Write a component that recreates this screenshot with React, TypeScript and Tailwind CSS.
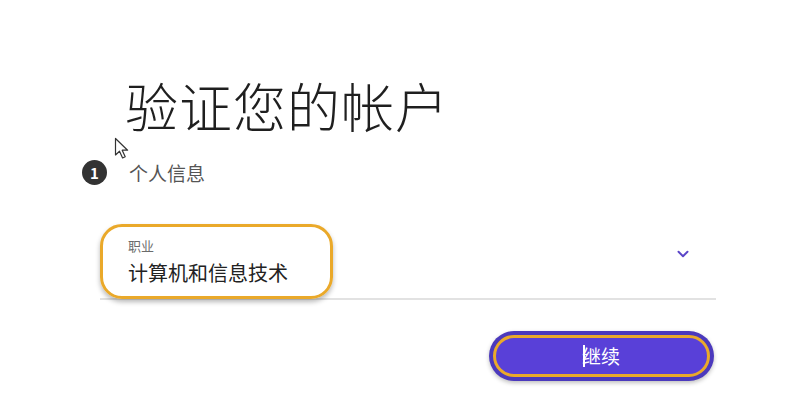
import { ChevronDown } from "lucide-react";

const cjk = { fontFamily: '"Noto Sans CJK SC", "Noto Sans", sans-serif' };

const CursorArrow = () => (
  <svg width="20" height="24" viewBox="0 0 20 24" className="absolute left-[114px] top-[137px]">
    <path
      d="M1.5 1.5 L1.5 18 L5.5 14.2 L8.6 21 L11.2 19.8 L8.2 13.2 L13.6 13.2 Z"
      fill="#fff"
      stroke="#333"
      strokeWidth="1.2"
      strokeLinejoin="round"
    />
  </svg>
);

export default function App() {
  return (
    <div className="relative min-h-[409px] w-[800px] bg-white overflow-hidden" style={cjk}>
      <CursorArrow />

      <div className="flex flex-col pt-[74px]">
        {/* Heading */}
        <h1 className="pl-[125px] text-[53px] leading-[62px] font-light text-[#1f1f1f] tracking-[1px]">
          验证您的帐户
        </h1>

        {/* Step indicator */}
        <div className="mt-[24px] flex items-center pl-[82px] gap-[22px]">
          <span className="flex h-[25px] w-[25px] items-center justify-center rounded-full bg-[#333333] text-[15px] font-bold text-white leading-none">
            1
          </span>
          <span className="text-[19px] leading-[24px] text-[#555555]">个人信息</span>
        </div>

        {/* Occupation select */}
        <div className="relative mt-[37px] ml-[100px] w-[616px] border-b-[2px] border-[#e2e2e2]">
          <div className="flex items-center justify-between h-[76px] pl-[28px] pr-[24px]">
            <div className="flex flex-col pt-[2px]">
              <span className="text-[13px] leading-[17px] text-[#6b6b6b]">职业</span>
              <span className="mt-[7px] text-[20px] leading-[24px] text-[#222222]">计算机和信息技术</span>
            </div>
            <ChevronDown className="mb-[12px] h-[18px] w-[18px] text-[#5b46c8]" strokeWidth={2.6} />
          </div>
          <div className="pointer-events-none absolute left-0 top-[2px] h-[75px] w-[233px] rounded-[22px] border-[3px] border-[#eaa92a] shadow-[0_3px_5px_rgba(0,0,0,0.28)]" />
        </div>

        {/* Continue button */}
        <div className="mt-[31px] flex justify-end pr-[86px]">
          <button className="flex h-[50px] w-[225px] items-center justify-center rounded-full bg-[#4b39bd] p-[4px] shadow-[0_2px_4px_rgba(0,0,0,0.25)]">
            <span className="flex h-full w-full items-center justify-center rounded-full border-[3px] border-[#eaa92a] bg-[#5940d8] text-[19px] text-white">
              <span className="mr-[-3px] inline-block h-[22px] w-[2px] bg-white" />
              继续
            </span>
          </button>
        </div>
      </div>
    </div>
  );
}
